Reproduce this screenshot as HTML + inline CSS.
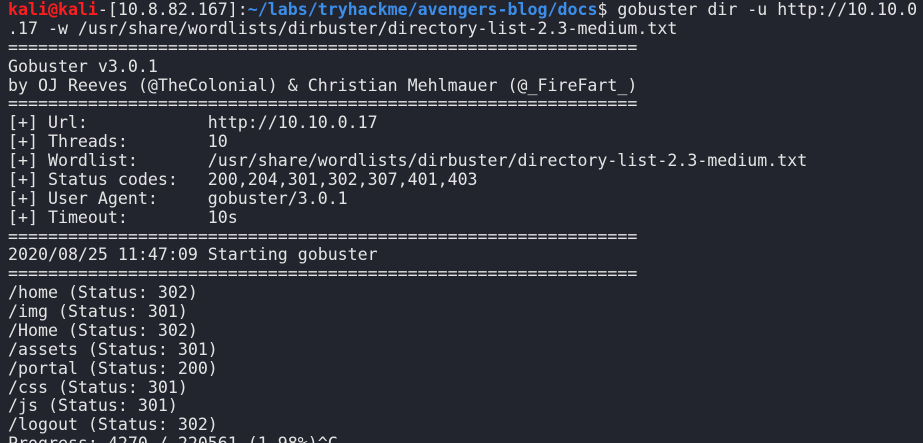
<!DOCTYPE html>
<html><head><meta charset="utf-8"><style>
html,body{margin:0;padding:0;background:#23252e;width:923px;height:443px;overflow:hidden}
pre{margin:0;padding:1px 0 0 8px;font-family:"DejaVu Sans Mono","Liberation Mono",monospace;font-size:16.6px;line-height:18.87px;color:#e4e4e4;white-space:pre}
.r{color:#ff1e1e;font-weight:bold}.b{color:#3b8eea;font-weight:bold}
</style></head><body><pre><span class="r">kali@kali</span>-[10.8.82.167]:<span class="b">~/labs/tryhackme/avengers-blog/docs</span>$ gobuster dir -u http://10.10.0
.17 -w /usr/share/wordlists/dirbuster/directory-list-2.3-medium.txt
===============================================================
Gobuster v3.0.1
by OJ Reeves (@TheColonial) &amp; Christian Mehlmauer (@_FireFart_)
===============================================================
[+] Url:            http://10.10.0.17
[+] Threads:        10
[+] Wordlist:       /usr/share/wordlists/dirbuster/directory-list-2.3-medium.txt
[+] Status codes:   200,204,301,302,307,401,403
[+] User Agent:     gobuster/3.0.1
[+] Timeout:        10s
===============================================================
2020/08/25 11:47:09 Starting gobuster
===============================================================
/home (Status: 302)
/img (Status: 301)
/Home (Status: 302)
/assets (Status: 301)
/portal (Status: 200)
/css (Status: 301)
/js (Status: 301)
/logout (Status: 302)
Progress: 4270 / 220561 (1.98%)^C</pre></body></html>
